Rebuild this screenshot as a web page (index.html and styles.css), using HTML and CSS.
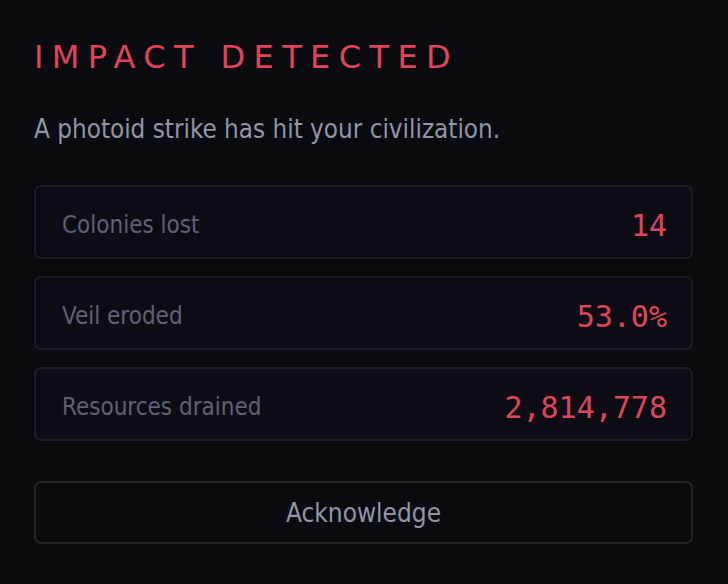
FILE: index.html
```html
<!DOCTYPE html>
<html lang="en">
<head>
	<meta charset="UTF-8">
	<title>Impact detected</title>
	<link rel="stylesheet" href="styles.css">
</head>
<body>
	<div class="panel">
		<h1 class="title">Impact Detected</h1>
		<p class="intro">A photoid strike has hit your civilization.</p>
		<div class="stats">
			<div class="stat">
				<span class="stat-label">Colonies lost</span>
				<span class="stat-value">14</span>
			</div>
			<div class="stat">
				<span class="stat-label">Veil eroded</span>
				<span class="stat-value">53.0%</span>
			</div>
			<div class="stat">
				<span class="stat-label">Resources drained</span>
				<span class="stat-value">2,814,778</span>
			</div>
		</div>
		<button class="ack">Acknowledge</button>
	</div>
</body>
</html>
```

FILE: styles.css
```css
* {
	padding: 0;
	margin: 0;
	box-sizing: border-box;
}
html, body {
	height: 100%;
}
body {
	background-color: #0a0b11;
	font-family: "DejaVu Sans Condensed", sans-serif;
}
.panel {
	padding: 37px 35px 0 34px;
}
.title {
	font-family: "DejaVu Sans", sans-serif;
	font-weight: normal;
	font-size: 32px;
	line-height: 40px;
	letter-spacing: 8.4px;
	text-transform: uppercase;
	color: #e0445a;
}
.intro {
	margin-top: 36px;
	font-size: 25.8px;
	line-height: 32px;
	color: #9096a6;
}
.stats {
	display: flex;
	flex-direction: column;
	gap: 17px;
	margin-top: 40px;
}
.stat {
	display: flex;
	justify-content: space-between;
	align-items: center;
	height: 74px;
	padding: 6px 24px 0 26px;
	border: 2px solid #1c1d25;
	border-radius: 7px;
	background-color: #0c0d14;
}
.stat-label {
	font-size: 24px;
	color: #5c6275;
}
.stat-value {
	font-family: "DejaVu Sans Mono", monospace;
	font-size: 30px;
	color: #e0445a;
}
.ack {
	display: block;
	width: 100%;
	height: 63px;
	margin-top: 40px;
	border: 2px solid #23242c;
	border-radius: 7px;
	background-color: #0a0b11;
	font-family: "DejaVu Sans Condensed", sans-serif;
	font-size: 26px;
	color: #9096a6;
}
```
